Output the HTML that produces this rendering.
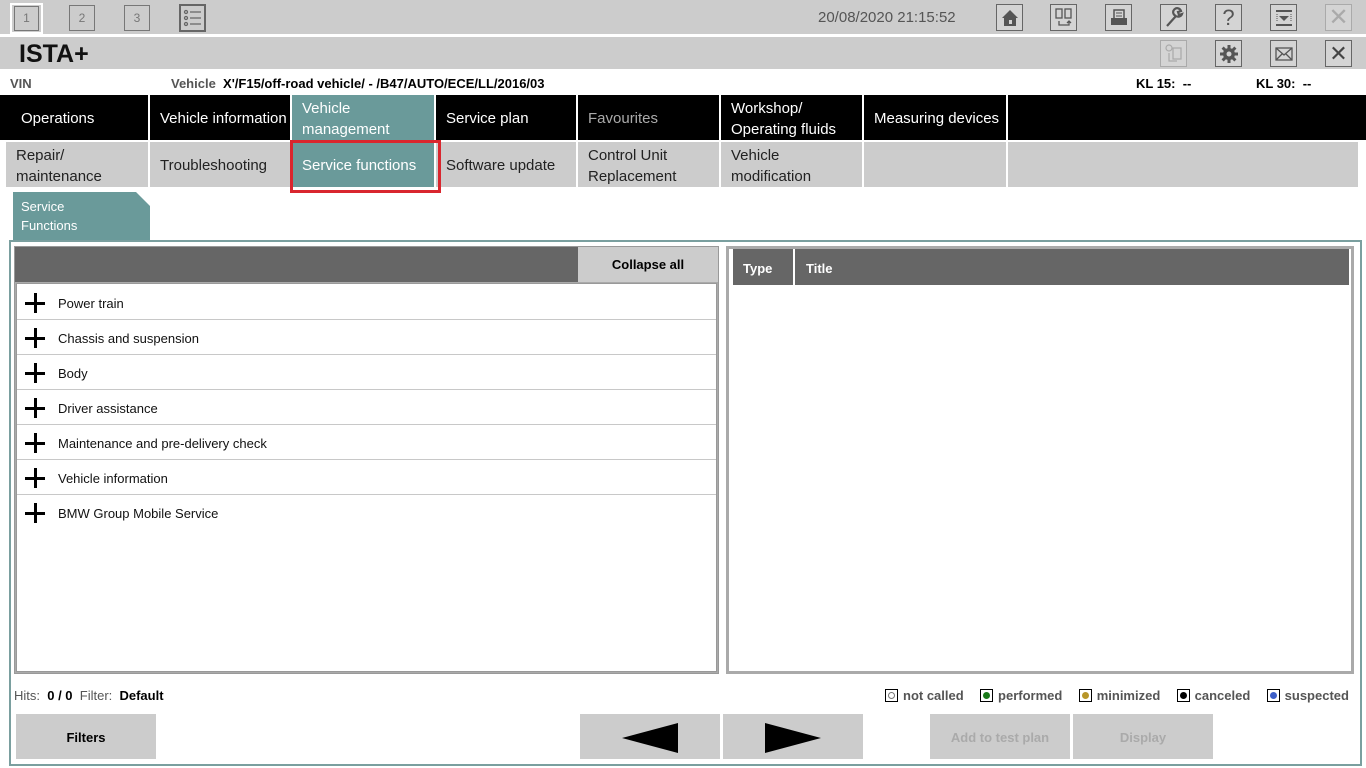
<!DOCTYPE html>
<html><head><meta charset="utf-8">
<style>
*{box-sizing:border-box;margin:0;padding:0}
body{width:1366px;height:768px;background:#fff;font-family:"Liberation Sans",Arial,sans-serif;position:relative;overflow:hidden}
.a{position:absolute}
.bar{background:#cccccc}
.ib{position:absolute;width:27px;height:27px;border:1px solid #666;background:#d4d4d4;display:flex;align-items:center;justify-content:center;color:#555}
.nav{position:absolute;top:95px;height:45px;background:#000;color:#fff;font-size:15px;line-height:21px;display:flex;align-items:center;padding-left:10px;padding-top:2px}
.sub{position:absolute;top:142px;height:45px;background:#cccccc;color:#222;font-size:15px;line-height:21px;display:flex;align-items:center;padding-left:10px;padding-top:2px}
.row{position:absolute;left:17px;width:699px;height:35px;border-bottom:1px solid #c8c8c8;font-size:13px;color:#111;display:flex;align-items:center;padding-left:41px;padding-top:2px}
.plus{position:absolute;left:8px;top:8px;width:20px;height:20px}
.plus:before{content:"";position:absolute;left:9px;top:0;width:2.5px;height:20px;background:#000}
.plus:after{content:"";position:absolute;top:9px;left:0;height:2.5px;width:20px;background:#000}
.btn{position:absolute;top:714px;height:45px;background:#cccccc;font-size:13px;font-weight:bold;display:flex;align-items:center;justify-content:center;padding-top:2px}
.lg{display:inline-block;width:13px;height:13px;border:1px solid #000;background:#fff;vertical-align:-2px;margin-right:5px;position:relative}
.lg i{position:absolute;left:2px;top:2px;width:7px;height:7px;border-radius:50%}
</style></head><body>
<div class="a bar" style="left:0;top:0;width:1366px;height:34px"></div>
<div class="a bar" style="left:0;top:37px;width:1366px;height:32px"></div>
<div class="a" style="left:10px;top:3px;width:33px;height:31px;border:2px solid #fff"></div>
<div class="a" style="left:14px;top:6px;width:25px;height:25px;border:1px solid #777;color:#777;font-size:12px;text-align:center;line-height:23px">1</div>
<div class="a" style="left:69px;top:5px;width:26px;height:26px;border:1px solid #777;color:#777;font-size:12px;text-align:center;line-height:24px">2</div>
<div class="a" style="left:124px;top:5px;width:26px;height:26px;border:1px solid #777;color:#777;font-size:12px;text-align:center;line-height:24px">3</div>
<div class="a" style="left:179px;top:4px;width:27px;height:28px;border:2px solid #666">
<svg width="23" height="24" viewBox="0 0 23 24"><g stroke="#666" fill="none" stroke-width="1.3"><circle cx="5" cy="6" r="1.5"/><circle cx="5" cy="12" r="1.5"/><circle cx="5" cy="18" r="1.5"/><path d="M9 6h11M9 12h11M9 18h11"/></g></svg></div>
<div class="a" style="left:818px;top:9px;font-size:15px;color:#555">20/08/2020 21:15:52</div>
<div class="ib" style="left:996px;top:4px"><svg width="20" height="20" viewBox="0 0 20 20"><path d="M10 2L2 10h2v8h12v-8h2z" fill="#555"/><rect x="9" y="12" width="3" height="4" fill="#d4d4d4"/></svg></div>
<div class="ib" style="left:1050px;top:4px"><svg width="22" height="22" viewBox="0 0 22 22"><g stroke="#555" fill="none" stroke-width="1.3"><rect x="3" y="2" width="6" height="9"/><rect x="12" y="2" width="6" height="9"/><path d="M6 14v4h10v-4M14 16l2-2 2 2"/></g></svg></div>
<div class="ib" style="left:1105px;top:4px"><svg width="22" height="22" viewBox="0 0 22 22"><g fill="#555"><rect x="3" y="11" width="16" height="7"/><rect x="6" y="3" width="10" height="9" fill="none" stroke="#555" stroke-width="1.5"/><path d="M8 6h6M8 9h6" stroke="#555"/></g></svg></div>
<div class="ib" style="left:1160px;top:4px"><svg width="22" height="22" viewBox="0 0 22 22"><path d="M4 19L13 9M13 9a4 4 0 1 1 5-5l-3 1 1 3 3-1a4 4 0 0 1-6 2" stroke="#555" stroke-width="2.2" fill="none"/></svg></div>
<div class="ib" style="left:1215px;top:4px;font-size:22px">?</div>
<div class="ib" style="left:1270px;top:4px"><svg width="22" height="22" viewBox="0 0 22 22"><g fill="#555"><rect x="3" y="3" width="16" height="2"/><rect x="3" y="17" width="16" height="2"/><path d="M6 9h10l-5 5z"/></g><path d="M4 7v8M18 7v8" stroke="#555" stroke-dasharray="1 1"/></svg></div>
<div class="ib" style="left:1325px;top:4px;border-color:#aaa;color:#aaa;font-size:24px">✕</div>
<div class="ib" style="left:1160px;top:40px;border-color:#aaa"><svg width="22" height="22" viewBox="0 0 22 22"><g stroke="#aaa" fill="none" stroke-width="1.2"><circle cx="6" cy="5" r="3"/><rect x="10" y="5" width="8" height="11"/><path d="M6 10v8h8"/></g></svg></div>
<div class="ib" style="left:1215px;top:40px"><svg width="22" height="22" viewBox="0 0 22 22"><circle cx="11" cy="11" r="6" fill="#555"/><path d="M11 2v18M2 11h18M4.6 4.6l12.8 12.8M17.4 4.6L4.6 17.4" stroke="#555" stroke-width="3"/><circle cx="11" cy="11" r="2.5" fill="#d4d4d4"/></svg></div>
<div class="ib" style="left:1270px;top:40px"><svg width="22" height="22" viewBox="0 0 22 22"><g stroke="#555" fill="none" stroke-width="1.3"><rect x="3" y="5" width="16" height="12"/><path d="M3 5l8 7 8-7M3 17l6-6M19 17l-6-6"/></g></svg></div>
<div class="ib" style="left:1325px;top:40px;font-size:22px;color:#444">✕</div>
<div class="a" style="left:19px;top:40px;font-size:25px;color:#111;font-weight:bold">ISTA+</div>
<div class="a" style="left:10px;top:76px;font-size:13px;font-weight:bold;color:#555">VIN</div>
<div class="a" style="left:171px;top:76px;font-size:13px;font-weight:bold;color:#555">Vehicle&nbsp; <span style="color:#000">X'/F15/off-road vehicle/ - /B47/AUTO/ECE/LL/2016/03</span></div>
<div class="a" style="left:1136px;top:76px;font-size:13px;font-weight:bold">KL 15:&nbsp; --</div>
<div class="a" style="left:1256px;top:76px;font-size:13px;font-weight:bold">KL 30:&nbsp; --</div>
<div class="a" style="left:0;top:95px;width:1366px;height:92px;background:#fff"></div>
<div class="nav" style="left:0;width:148px;padding-left:21px">Operations</div>
<div class="nav" style="left:150px;width:140px">Vehicle information</div>
<div class="nav" style="left:292px;width:142px;background:#6a9a9a">Vehicle<br>management</div>
<div class="nav" style="left:436px;width:140px">Service plan</div>
<div class="nav" style="left:578px;width:141px;color:#aaa">Favourites</div>
<div class="nav" style="left:721px;width:141px">Workshop/<br>Operating fluids</div>
<div class="nav" style="left:864px;width:142px">Measuring devices</div>
<div class="nav" style="left:1008px;width:358px"></div>
<div class="sub" style="left:6px;width:142px">Repair/<br>maintenance</div>
<div class="sub" style="left:150px;width:140px">Troubleshooting</div>
<div class="sub" style="left:292px;width:142px;background:#6a9a9a;color:#fff">Service functions</div>
<div class="sub" style="left:436px;width:140px">Software update</div>
<div class="sub" style="left:578px;width:141px">Control Unit<br>Replacement</div>
<div class="sub" style="left:721px;width:141px">Vehicle<br>modification</div>
<div class="sub" style="left:864px;width:142px"></div>
<div class="sub" style="left:1008px;width:350px"></div>
<div class="a" style="left:290px;top:140px;width:151px;height:53px;border:3px solid #d9262e"></div>
<svg class="a" style="left:13px;top:192px" width="137" height="50"><path d="M0 0H123L137 14V50H0z" fill="#6a9a9a"/></svg>
<div class="a" style="left:21px;top:197px;color:#fff;font-size:13px;line-height:19px">Service<br>Functions</div>
<div class="a" style="left:9px;top:240px;width:1353px;height:526px;border:2px solid #7a9f9f"></div>
<div class="a" style="left:14px;top:246px;width:705px;height:428px;border:1px solid #999;background:#aaa"></div>
<div class="a" style="left:15px;top:247px;width:563px;height:35px;background:#666"></div>
<div class="a" style="left:578px;top:247px;width:140px;height:35px;background:#cccccc;font-size:13px;font-weight:bold;display:flex;align-items:center;justify-content:center">Collapse all</div>
<div class="a" style="left:16px;top:283px;width:701px;height:389px;background:#fff;border:1px solid #999"></div>
<div class="row" style="top:285px"><span class="plus"></span>Power train</div>
<div class="row" style="top:320px"><span class="plus"></span>Chassis and suspension</div>
<div class="row" style="top:355px"><span class="plus"></span>Body</div>
<div class="row" style="top:390px"><span class="plus"></span>Driver assistance</div>
<div class="row" style="top:425px"><span class="plus"></span>Maintenance and pre-delivery check</div>
<div class="row" style="top:460px"><span class="plus"></span>Vehicle information</div>
<div class="row" style="top:495px;border-bottom:none"><span class="plus"></span>BMW Group Mobile Service</div>
<div class="a" style="left:726px;top:246px;width:628px;height:428px;border:3px solid #aaa;background:#fff"></div>
<div class="a" style="left:733px;top:249px;width:616px;height:36px;background:#666"></div>
<div class="a" style="left:793px;top:249px;width:2px;height:36px;background:#fff"></div>
<div class="a" style="left:743px;top:261px;color:#fff;font-size:13px;font-weight:bold">Type</div>
<div class="a" style="left:806px;top:261px;color:#fff;font-size:13px;font-weight:bold">Title</div>
<div class="a" style="left:14px;top:688px;font-size:13px;color:#555">Hits:&nbsp; <b style="color:#000">0 / 0</b>&nbsp; Filter:&nbsp; <b style="color:#000">Default</b></div>
<div class="a" style="left:885px;top:688px;width:464px;font-size:13px;font-weight:bold;color:#555;white-space:nowrap;display:flex;justify-content:space-between">
<span><span class="lg"><i style="border:1px solid #777"></i></span>not called</span>
<span><span class="lg"><i style="background:#1a7a1a"></i></span>performed</span>
<span><span class="lg"><i style="background:#b8962a"></i></span>minimized</span>
<span><span class="lg"><i style="background:#000"></i></span>canceled</span>
<span><span class="lg"><i style="background:#3d5fc8"></i></span>suspected</span></div>
<div class="btn" style="left:16px;width:140px">Filters</div>
<div class="btn" style="left:580px;width:140px"><svg width="60" height="32"><path d="M2 16L58 1V31z" fill="#000"/></svg></div>
<div class="btn" style="left:723px;width:140px"><svg width="60" height="32"><path d="M58 16L2 1V31z" fill="#000"/></svg></div>
<div class="btn" style="left:930px;width:140px;color:#aaa">Add to test plan</div>
<div class="btn" style="left:1073px;width:140px;color:#aaa">Display</div>
</body></html>
